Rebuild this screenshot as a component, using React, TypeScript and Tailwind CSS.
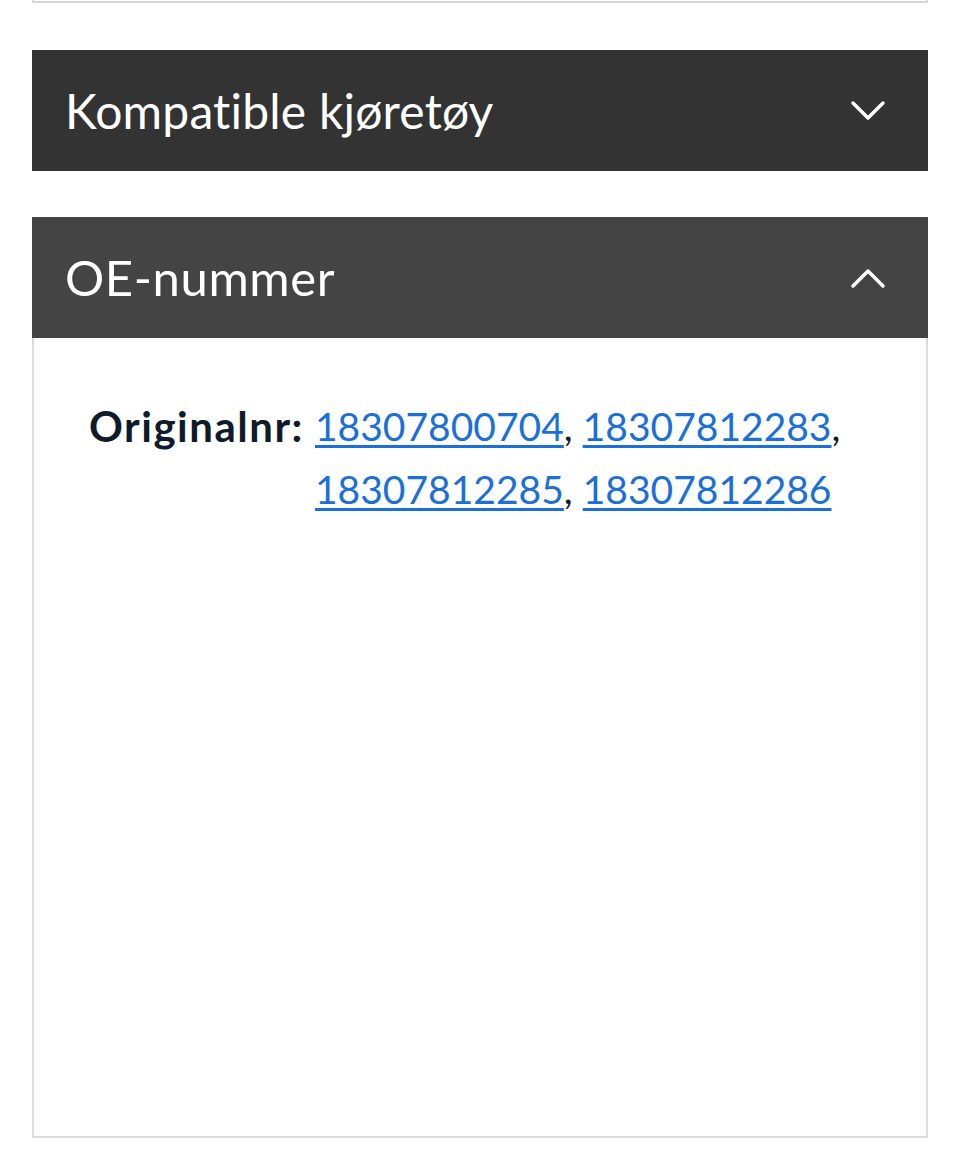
import React from "react";

const numbers = ["18307800704", "18307812283", "18307812285", "18307812286"];

const Chevron = ({ up = false }: { up?: boolean }) => (
  <svg width="36" height="22" viewBox="0 0 36 22" fill="none" className="shrink-0">
    <path
      d={up ? "M3 19 L18 4 L33 19" : "M3 3 L18 18 L33 3"}
      stroke="#ffffff"
      strokeWidth="3.5"
      strokeLinecap="round"
      strokeLinejoin="round"
    />
  </svg>
);

export default function App() {
  return (
    <div className="min-h-[1156px] bg-white font-['Lato',sans-serif]">
      <div className="px-8">
        {/* bottom edge of the panel above */}
        <div className="h-[3px] border-x-2 border-b-2 border-[#d9d9d9]" />

        <button className="mt-[47px] flex h-[121px] w-full items-center justify-between bg-[#333333] pl-[33px] pr-[42px] text-left">
          <span className="text-[48px] leading-none tracking-[0.2px] text-white">Kompatible kjøretøy</span>
          <Chevron />
        </button>

        <div className="mt-[46px]">
          <button className="flex h-[121px] w-full items-center justify-between bg-[#444444] pl-[33px] pr-[42px] text-left">
            <span className="text-[49px] leading-none tracking-[0.6px] text-white">OE-nummer</span>
            <Chevron up />
          </button>
          <div className="h-[800px] border-x-2 border-b-2 border-[#dcdcdc] px-[55px] pt-[57px]">
            <div className="flex text-[39px] leading-[63px]">
              <span className="w-[226px] shrink-0 text-[42px] font-bold tracking-[1.5px] text-[#0f1a2a]">
                Originalnr:
              </span>
              <div className="text-[#1b6fd8]">
                {numbers.map((n, i) => (
                  <React.Fragment key={n}>
                    <a href="#" className="underline underline-offset-4">
                      {n}
                    </a>
                    {i < numbers.length - 1 && <span className="text-[#0f1a2a]">, </span>}
                  </React.Fragment>
                ))}
              </div>
            </div>
          </div>
        </div>
      </div>
    </div>
  );
}
